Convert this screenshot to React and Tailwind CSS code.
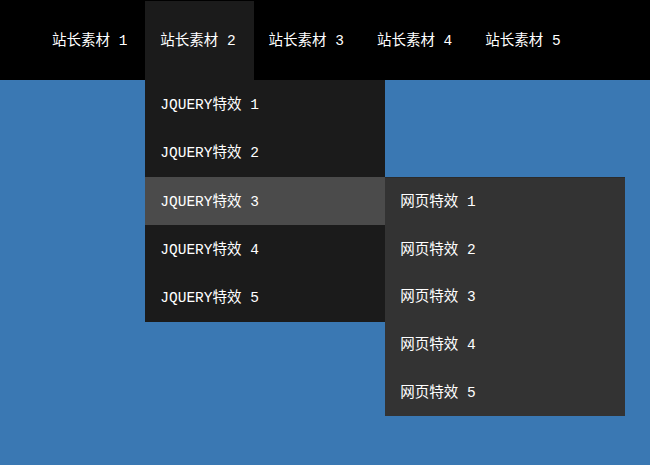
const navItems = ['站长素材 1', '站长素材 2', '站长素材 3', '站长素材 4', '站长素材 5'];
const subItems = ['JQUERY特效 1', 'JQUERY特效 2', 'JQUERY特效 3', 'JQUERY特效 4', 'JQUERY特效 5'];
const thirdItems = ['网页特效 1', '网页特效 2', '网页特效 3', '网页特效 4', '网页特效 5'];

const font = "font-['Liberation_Mono','Noto_Sans_CJK_SC',monospace] text-[14.5px]";

export default function App() {
    return (
        <div className={`h-[465px] w-[650px] overflow-hidden bg-[#3a78b3] text-white ${font}`}>
            <ul className="flex h-[80px] bg-black pl-[37px]">
                {navItems.map((item, i) => (
                    <li key={item} className={`relative mt-px w-[108.3px] ${i === 1 ? 'bg-[#1b1b1b]' : ''}`}>
                        <a className="flex h-full items-center whitespace-pre pl-[15px] pt-[2px]">{item}</a>
                        {i === 1 && (
                            <ul className="absolute left-0 top-[79px] w-[240px] bg-[#1b1b1b]">
                                {subItems.map((s, j) => (
                                    <li key={s} className={`relative flex h-[48.4px] items-center whitespace-pre pl-[15px] ${j === 2 ? 'bg-[#4b4b4b]' : ''}`}>
                                        <span className="pt-[3px]">{s}</span>
                                        {j === 2 && (
                                            <ul className="absolute left-[240px] top-0 w-[240px] border-t border-[#2b2b2b] bg-[#333333]">
                                                {thirdItems.map((t) => (
                                                    <li key={t} className="flex h-[47.6px] items-center whitespace-pre pl-[15px] pt-[3px]">{t}</li>
                                                ))}
                                            </ul>
                                        )}
                                    </li>
                                ))}
                            </ul>
                        )}
                    </li>
                ))}
            </ul>
        </div>
    );
}
